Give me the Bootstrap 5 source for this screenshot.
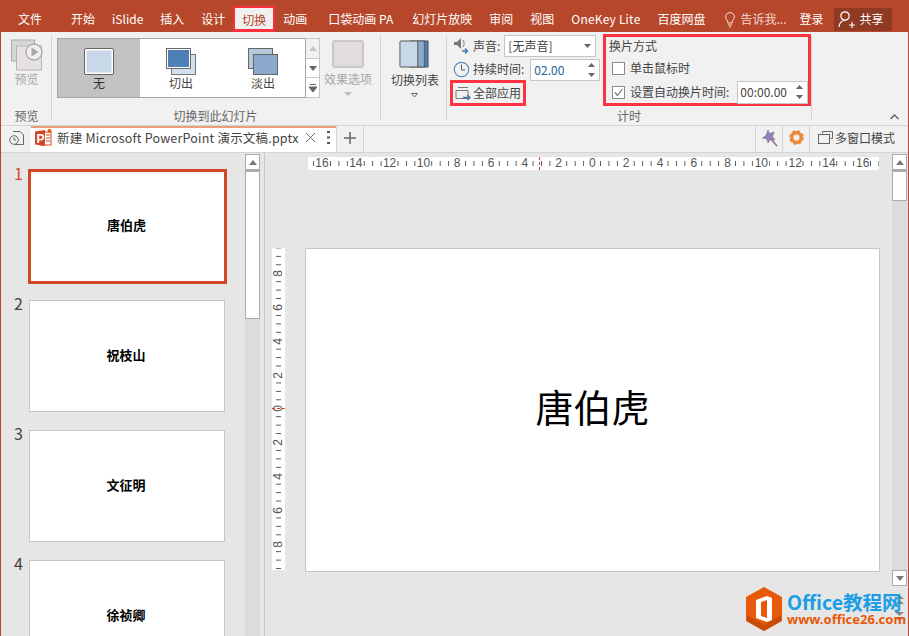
<!DOCTYPE html>
<html lang="zh-CN">
<head>
<meta charset="utf-8">
<title>PowerPoint 切换</title>
<link rel="stylesheet" href="https://cdn.jsdelivr.net/npm/bootstrap@5.3.0/dist/css/bootstrap.min.css">
<style>
html,body{margin:0;height:636px;overflow:hidden;}
body{font-family:"Noto Sans CJK SC","Noto Sans",sans-serif;font-size:12px;line-height:16px;color:#444;background:#e6e6e6;}
.pp-app{width:909px;height:636px;border-left:1px solid #b7472a;border-right:1px solid #b7472a;position:relative;overflow:hidden;}
.pp-menu{height:32px;background:#b7472a;color:#fff;padding-left:17px;column-gap:17px;white-space:nowrap;}
.pp-menu>span{line-height:38px;height:32px;flex:none;}
.pp-menu .pp-file{margin-right:12px;}
.pp-menu .pp-active{background:#f1f1f1;color:#b7472a;height:26px;line-height:24px;margin:6px -9px 0;padding:0 7px;border:2px solid #fb2f3d;border-bottom-width:3px;}
.pp-menu .pp-pa{margin-left:4px;padding-right:2px;}
.pp-menu .pp-onekey{letter-spacing:.2px;}
.pp-menu .pp-tell{margin-right:-4px;line-height:38px;color:#f0d8d0;}
.pp-menu .pp-share{background:#8f3a22;height:23px;line-height:22px;width:58px;margin:8px 0 0 -7px;padding-left:4px;}
.pp-ribbon{height:93px;background:#f1f1f1;color:#444;}
.pp-group{flex:none;padding:4px 0 1px;position:relative;}
.pp-group::after{content:"";position:absolute;right:0;top:4px;bottom:5px;width:1px;background:#d4d4d4;}
.pp-group-label{color:#666;text-align:center;height:16px;margin-top:auto;line-height:16px;}
.pp-dim{color:#a6a6a6;}
.pp-gallery{height:60px;width:263px;margin:2px 0 0 5px;}
.pp-gal-items{width:249px;border:1px solid #a6a6a6;background:#fff;}
.pp-gal-item{width:82px;text-align:center;padding-top:8px;line-height:15px;}
.pp-gal-item svg{display:block;margin:0 auto -2px;height:30px;}
.pp-gal-on{background:#c2c2c2;color:#333;}
.pp-gal-side{width:14px;border:1px solid #c6c6c6;border-left:0;}
.pp-gal-side>div{flex:1;background:#fff;border-bottom:1px solid #c6c6c6;}
.pp-gal-side>div:first-child{background:#f1f1f1;}
.pp-gal-side>div:last-child{border-bottom:0;}
.pp-field{background:#fff;border:1px solid #c6c6c6;height:22px;line-height:20px;padding-left:3px;color:#444;position:relative;}
.pp-field-num{color:#2b5f96;font-size:12px;}
.pp-redbox{border:3px solid #fb3440;}
.pp-check{width:13px;height:13px;border:1px solid #8a8a8a;background:#fff;flex:none;}
.pp-tabs{height:28px;background:#f1f1f1;border-top:1px solid #d4d4d4;border-bottom:1px solid #d4d4d4;}
.pp-doc{width:305px;height:26px;margin-left:6px;padding-bottom:4px;background:#fff;border-top:2px solid #ec9d7c;border-bottom:1px solid #fff;font-size:12.5px;letter-spacing:.2px;white-space:nowrap;}
.pp-tabcell{height:26px;border-left:1px solid #d4d4d4;padding-bottom:3px;}
.pp-main{height:483px;background:#e6e6e6;}
.pp-side{width:264px;flex:none;border-right:1px solid #c6c6c6;height:483px;}
.pp-thumbs{width:244px;padding-top:8px;overflow:hidden;}
.pp-row{height:130px;flex:none;align-items:center;}
.pp-num{width:28px;flex:none;padding-left:7px;text-align:center;font-size:16px;line-height:19px;align-self:flex-start;margin-top:3px;color:#444;}
.pp-num-on{color:#d24726;}
.pp-thumb{width:196px;height:112px;padding:0 2px 2px 0;background:#fff;border:1px solid #c6c6c6;font-weight:700;color:#000;font-size:13px;}
.pp-thumb-on{width:199px;height:115px;margin-left:-1px;border:3px solid #d24726;}
.pp-bar{width:15px;flex:none;margin-top:1px;background:#dcdcdc;}
.pp-bar-btn{height:16px;background:#fff;border:1px solid #ababab;flex:none;}
.pp-bar-thumb{background:#fff;border:1px solid #ababab;border-top-width:2px;flex:none;}
.pp-editor{flex:1;min-width:0;}
.pp-canvas{flex:1;min-width:0;}
.pp-hruler{width:571px;height:13px;margin:4px 0 0 43px;background:#fff linear-gradient(to right,#555 1px,transparent 1px) 5.15px center/8.45px 5px repeat-x;overflow:hidden;position:relative;color:#555;font-size:12px;line-height:13px;font-family:"Liberation Sans",sans-serif;}
.pp-hcell{width:33.8px;flex:none;text-align:center;}
.pp-hcell span{background:#fff;padding:0 .5px;display:inline-block;}
.pp-hcell:first-child{margin-left:-2.9px;}
.pp-vruler{width:13px;height:322px;margin:0 20px 0 7px;background:#fff linear-gradient(to bottom,#555 1px,transparent 1px) center 7.9px/5px 8.45px repeat-y;overflow:hidden;position:relative;color:#555;font-size:12px;line-height:13px;font-family:"Liberation Sans",sans-serif;padding-top:9.1px;}
.pp-vcell{height:33.8px;flex:none;}
.pp-vcell span{background:#fff;writing-mode:vertical-rl;transform:rotate(180deg);display:inline-block;padding:.5px 0;}
.pp-stage{margin-top:78px;}
.pp-slide{width:575px;height:324px;padding-bottom:8px;background:#fff;border:1px solid #c6c6c6;color:#000;font-size:38px;flex:none;letter-spacing:0;}
.pp-redh{position:absolute;left:231px;top:0;height:13px;width:0;border-left:1px dashed #d24726;}
.pp-redv{position:absolute;left:0;top:160px;width:13px;height:0;border-top:1px dashed #d24726;}
.pp-wm{position:absolute;left:745px;top:587px;width:163px;height:44px;gap:5px;}
.pp-wm-a{color:#1c9de4;font-size:19.5px;font-weight:700;line-height:20px;font-family:"Noto Sans CJK SC",sans-serif;white-space:nowrap;}
.pp-wm-b{color:#e8590c;font-size:13px;font-weight:700;line-height:14px;font-family:"Noto Sans",sans-serif;white-space:nowrap;}
.pp-rcol{width:15px;margin-right:1px;flex:none;}
.pp-rcol .pp-bar{height:432px;}
.pp-jump{height:18px;}
.pp-pglyph{font:700 12px "Liberation Sans",sans-serif;fill:#fff;}
</style>
</head>
<body>
<div class="pp-app d-flex flex-column">
  <div class="pp-menu d-flex">
    <span class="pp-file">文件</span><span>开始</span><span>iSlide</span><span>插入</span><span>设计</span>
    <span class="pp-active">切换</span><span>动画</span><span class="pp-pa">口袋动画 PA</span><span>幻灯片放映</span><span>审阅</span><span>视图</span><span class="pp-onekey">OneKey Lite</span><span>百度网盘</span>
    <span class="pp-tell d-flex align-items-start"><svg width="14" height="32" viewBox="0 0 14 32"><path d="M7 12.500a4.500 4.500 0 0 0-2.300 8.300V23h4.600v-2.200A4.500 4.500 0 0 0 7 12.500zM5 25h4M6 27h2" fill="none" stroke="#f5dfd8" stroke-width="1"/></svg><span class="ms-1">告诉我...</span></span>
    <span class="pp-plain">登录</span>
    <span class="pp-share d-flex"><svg width="18" height="22" viewBox="0 0 18 22" fill="none" stroke="#fff" stroke-width="1.200"><circle cx="7" cy="8" r="4.200"/><path d="M1 19c.5-4 2.500-6.500 6-6.500M11 17h6M14 14v6"/></svg><span class="ms-1">共享</span></span>
  </div>

  <div class="pp-ribbon d-flex">
    <div class="pp-group d-flex flex-column" style="width:51px;padding-top:7px">
      <div class="text-center pp-dim">
        <svg width="32" height="32" viewBox="0 0 32 32" class="d-block mx-auto"><rect x="0.500" y="1" width="23" height="21" fill="#d6d6d6" stroke="#a9a9a9"/><rect x="5.500" y="7" width="25" height="24" fill="#e6dfe3" stroke="#b5b5b5"/><circle cx="23" cy="13" r="8" fill="#efefef" stroke="#a9a9a9" stroke-width="1.300"/><path d="M20.500 8.500l7 4.500-7 4.500z" fill="#a6a6a6"/></svg>
        <div>预览</div>
      </div>
      <div class="pp-group-label">预览</div>
    </div>
    <div class="pp-group d-flex flex-column" style="width:329px">
      <div class="d-flex">
        <div class="pp-gallery d-flex">
          <div class="pp-gal-items d-flex">
            <div class="pp-gal-item pp-gal-on"><svg width="32" height="30" viewBox="0 0 32 30"><rect x="1.500" y="1.500" width="29" height="26" rx="1.500" fill="#fff" stroke="#666"/><rect x="3.500" y="3.500" width="25" height="22" fill="#c8d8e8"/></svg>无</div>
            <div class="pp-gal-item"><svg width="32" height="30" viewBox="0 0 32 30"><rect x="6.500" y="7.500" width="24" height="20" fill="#d4dfec" stroke="#777"/><rect x="1.500" y="1.500" width="24" height="20" fill="#fff" stroke="#666"/><rect x="3" y="3" width="21" height="17" fill="#4e7fb5"/></svg>切出</div>
            <div class="pp-gal-item"><svg width="32" height="30" viewBox="0 0 32 30"><rect x="1.500" y="1.500" width="24" height="20" fill="#b5c8dc" stroke="#666"/><rect x="6.500" y="7.500" width="24" height="20" fill="#8aa9cb" stroke="#666"/></svg>淡出</div>
          </div>
          <div class="pp-gal-side d-flex flex-column">
            <div class="d-flex align-items-center justify-content-center"><svg width="8" height="5"><path d="M0 5L4 0l4 5z" fill="#c6c6c6"/></svg></div>
            <div class="d-flex align-items-center justify-content-center"><svg width="8" height="5"><path d="M0 0l4 5 4-5z" fill="#666"/></svg></div>
            <div class="d-flex align-items-center justify-content-center"><svg width="8" height="8"><path d="M1 .5h6M0 3l4 5 4-5z" stroke="#666" fill="#666"/></svg></div>
          </div>
        </div>
        <div class="text-center pp-dim" style="width:54px;padding-left:2px;margin-top:4px">
          <svg width="32" height="28" viewBox="0 0 32 28" class="d-block mx-auto"><rect x="1" y="1" width="30" height="26" rx="1.500" fill="#e3dde1" stroke="#bdbdbd" stroke-width="1.500"/></svg>
          <div style="margin-top:3px;white-space:nowrap">效果选项</div>
          <svg width="8" height="5" class="d-block mx-auto" style="margin-top:5px"><path d="M0 0l4 4 4-4z" fill="#bdbdbd"/></svg>
        </div>
      </div>
      <div class="pp-group-label" style="padding-right:2px">切换到此幻灯片</div>
    </div>
    <div class="pp-group text-center" style="width:66px;padding-top:8px">
      <svg width="30" height="29" viewBox="0 0 32 29" class="d-block mx-auto" preserveAspectRatio="none"><rect x="19" y="1" width="12" height="26" fill="#4e7fb5" stroke="#555"/><rect x="12" y="1" width="15" height="26" fill="#8aa9cb" stroke="#555"/><rect x="1" y="1" width="19" height="26" rx="1" fill="#c8d8e8" stroke="#555"/></svg>
      <div style="margin-top:3px;white-space:nowrap;padding-left:2px">切换列表</div>
      <svg width="7" height="5" class="d-block mx-auto" style="margin-top:5px"><path d="M.5.500l3 3.500 3-3.500z" fill="none" stroke="#666"/></svg>
    </div>
    <div class="pp-group d-flex flex-column" style="width:365px;padding-top:2px">
      <div class="d-flex">
        <div style="width:156px;padding-left:3px">
          <div class="d-flex align-items-center" style="height:24px;padding-left:3px">
            <svg width="17" height="18" viewBox="0 0 17 18" fill="none"><path d="M1 5h3l4-4v11l-4-4H1z" fill="#777"/><path d="M10 3c1.500 2 1.500 5 0 7" stroke="#777"/><path d="M9 14h5M12 11.500l2.500 2.500-2.500 2.500" stroke="#3f76b0" stroke-width="1.300"/></svg>
            <span style="margin-left:3px">声音:</span>
            <div class="pp-field d-flex align-items-center justify-content-between" style="width:92px;margin-left:4px;padding-right:4px"><span>[无声音]</span><svg width="7" height="4"><path d="M0 0l3.500 4L7 0z" fill="#666"/></svg></div>
          </div>
          <div class="d-flex align-items-center" style="height:23px;padding-left:3px">
            <svg width="17" height="17" viewBox="0 0 17 17" fill="none"><circle cx="8.500" cy="8.500" r="7.200" stroke="#5a8dc0" stroke-width="1.200"/><path d="M8.500 3.500v5.500h3.500" stroke="#555"/></svg>
            <span style="margin-left:3px;padding-bottom:1px">持续时间:</span>
            <div class="pp-field pp-field-num d-flex align-items-center justify-content-between" style="width:70px;margin-left:6px;padding-right:4px"><span>02.00</span><svg width="7" height="16"><path d="M0 5l3.500-4L7 5zM0 11l3.500 4L7 11z" fill="#666"/></svg></div>
          </div>
          <div class="pp-redbox d-inline-flex align-items-center" style="width:76px;height:26px;margin-top:-1px;padding-left:2px">
            <svg width="16" height="16" viewBox="0 0 16 16" fill="none"><path d="M3 2.500h10M1 5.500h12v8H1z" stroke="#777"/><path d="M8 12.500h7M12.500 10l2.500 2.500-2.500 2.500" stroke="#3f76b0" stroke-width="1.300"/></svg>
            <span style="margin-left:2px;white-space:nowrap">全部应用</span>
          </div>
        </div>
        <div class="pp-redbox" style="width:208px;height:72px;padding:1px 0 0 3px">
          <div>换片方式</div>
          <div class="d-flex align-items-center" style="margin:6px 0 0 3px;height:16px"><span class="pp-check"></span><span style="margin-left:5px">单击鼠标时</span></div>
          <div class="d-flex align-items-center" style="margin:8px 0 0 3px;height:16px">
            <span class="pp-check d-flex"><svg width="11" height="11" viewBox="0 0 11 11"><path d="M2 5.500l2.500 3L9.500 2" fill="none" stroke="#777" stroke-width="1.200"/></svg></span>
            <span style="margin-left:5px;white-space:nowrap">设置自动换片时间:</span>
            <div class="pp-field pp-field-num d-flex align-items-center justify-content-between" style="width:71px;height:23px;margin-left:8px;padding-left:2px;padding-right:4px;color:#444"><span>00:00.00</span><svg width="7" height="16"><path d="M0 5l3.500-4L7 5zM0 11l3.500 4L7 11z" fill="#666"/></svg></div>
          </div>
        </div>
      </div>
      <div class="pp-group-label" style="margin-right:1px">计时</div>
    </div>
    <div class="flex-grow-1 d-flex align-items-end justify-content-end" style="padding:0 9px 5px 0">
      <svg width="9" height="6"><path d="M.5 5L4.500 1l4 4" fill="none" stroke="#666" stroke-width="1.500"/></svg>
    </div>
  </div>

  <div class="pp-tabs d-flex align-items-start">
    <div class="d-flex align-items-center" style="height:26px;padding:0 0 3px 8px">
      <svg width="16" height="16" viewBox="0 0 16 16" fill="none" stroke="#666"><path d="M4 1.500h7l3.500 3.500v9.500H6"/><circle cx="5" cy="10" r="4.300" fill="#f1f1f1"/><path d="M5 7.500V10h2"/></svg>
    </div>
    <div class="pp-doc d-flex align-items-center">
      <svg width="17" height="18" viewBox="0 0 17 18" style="margin:0 5px 0 4px"><rect x="6" y="3" width="10" height="13" fill="#fff" stroke="#d24726"/><path d="M0 2.500l10-1.500v16L0 15.500z" fill="#d24726"/><circle cx="14.500" cy="2" r="2" fill="#e8590c"/><path d="M11 6h4M11 9h4M11 12h4" stroke="#d24726"/><text x="1.500" y="13.500" class="pp-pglyph">P</text></svg>
      <span>新建 Microsoft PowerPoint 演示文稿.pptx</span>
      <svg width="11" height="11" style="margin-left:6px"><path d="M1 1l9 9M10 1l-9 9" stroke="#666"/></svg>
      <svg width="3" height="13" style="margin-left:11px"><path d="M0 1h3M0 6.500h3M0 12h3" stroke="#555" stroke-width="2"/></svg>
    </div>
    <div class="pp-tabcell d-flex align-items-center justify-content-center" style="width:27px"><svg width="12" height="12"><path d="M6 0v12M0 6h12" stroke="#666" stroke-width="1.500"/></svg></div>
    <div class="pp-tabcell" style="width:392px"></div>
    <div class="pp-tabcell d-flex align-items-center justify-content-center" style="width:27px"><svg width="17" height="18" viewBox="0 0 17 18"><path d="M7 1l1.500 3.500L13 3l-1.500 4.500L14 11l-4.500-.5L7 14l-1-4-4.500-1L5 6.500z" fill="#9a7cc4" stroke="#777" stroke-width=".6"/><path d="M10 10l6 7" stroke="#777" stroke-width="1.500"/></svg></div>
    <div class="pp-tabcell d-flex align-items-center justify-content-center" style="width:27px"><svg width="15" height="15" viewBox="0 0 15 15"><circle cx="7.500" cy="7.500" r="4.800" fill="none" stroke="#ed8b3a" stroke-width="3.400"/><circle cx="7.500" cy="7.500" r="6.400" fill="none" stroke="#ed8b3a" stroke-width="1.800" stroke-dasharray="3 2"/></svg></div>
    <div class="pp-tabcell d-flex align-items-center flex-grow-1" style="padding-left:8px;white-space:nowrap">
      <svg width="15" height="13" viewBox="0 0 15 13" fill="none" stroke="#666" style="margin-right:2px"><path d="M4.500 2.500v-2h10v7h-2"/><rect x=".5" y="3.500" width="11" height="9" fill="#f1f1f1"/></svg>多窗口模式
    </div>
  </div>

  <div class="pp-main d-flex">
    <div class="pp-side d-flex">
      <div class="pp-thumbs d-flex flex-column">
        <div class="pp-row d-flex"><div class="pp-num pp-num-on">1</div><div class="pp-thumb pp-thumb-on d-flex align-items-center justify-content-center">唐伯虎</div></div>
        <div class="pp-row d-flex"><div class="pp-num">2</div><div class="pp-thumb d-flex align-items-center justify-content-center">祝枝山</div></div>
        <div class="pp-row d-flex"><div class="pp-num">3</div><div class="pp-thumb d-flex align-items-center justify-content-center">文征明</div></div>
        <div class="pp-row d-flex"><div class="pp-num">4</div><div class="pp-thumb d-flex align-items-center justify-content-center">徐祯卿</div></div>
      </div>
      <div class="pp-bar d-flex flex-column">
        <div class="pp-bar-btn d-flex align-items-center justify-content-center"><svg width="8" height="5"><path d="M0 5L4 0l4 5z" fill="#777"/></svg></div>
        <div class="pp-bar-thumb" style="height:149px"></div>
      </div>
    </div>
    <div class="pp-editor d-flex">
      <div class="pp-canvas d-flex flex-column">
        <div class="pp-hruler d-flex">
          <div class="pp-hcell"><span>16</span></div><div class="pp-hcell"><span>14</span></div><div class="pp-hcell"><span>12</span></div><div class="pp-hcell"><span>10</span></div><div class="pp-hcell"><span>8</span></div><div class="pp-hcell"><span>6</span></div><div class="pp-hcell"><span>4</span></div><div class="pp-hcell"><span>2</span></div><div class="pp-hcell"><span>0</span></div><div class="pp-hcell"><span>2</span></div><div class="pp-hcell"><span>4</span></div><div class="pp-hcell"><span>6</span></div><div class="pp-hcell"><span>8</span></div><div class="pp-hcell"><span>10</span></div><div class="pp-hcell"><span>12</span></div><div class="pp-hcell"><span>14</span></div><div class="pp-hcell"><span>16</span></div>
          <div class="pp-redh"></div>
        </div>
        <div class="pp-stage d-flex align-items-start">
          <div class="pp-vruler d-flex flex-column">
            <div class="pp-vcell d-flex align-items-center justify-content-center"><span>8</span></div><div class="pp-vcell d-flex align-items-center justify-content-center"><span>6</span></div><div class="pp-vcell d-flex align-items-center justify-content-center"><span>4</span></div><div class="pp-vcell d-flex align-items-center justify-content-center"><span>2</span></div><div class="pp-vcell d-flex align-items-center justify-content-center"><span>0</span></div><div class="pp-vcell d-flex align-items-center justify-content-center"><span>2</span></div><div class="pp-vcell d-flex align-items-center justify-content-center"><span>4</span></div><div class="pp-vcell d-flex align-items-center justify-content-center"><span>6</span></div><div class="pp-vcell d-flex align-items-center justify-content-center"><span>8</span></div>
            <div class="pp-redv"></div>
          </div>
          <div class="pp-slide d-flex align-items-center justify-content-center">唐伯虎</div>
        </div>
      </div>
      <div class="pp-rcol d-flex flex-column">
        <div class="pp-bar d-flex flex-column">
          <div class="pp-bar-btn d-flex align-items-center justify-content-center"><svg width="8" height="5"><path d="M0 5L4 0l4 5z" fill="#777"/></svg></div>
          <div class="pp-bar-thumb" style="height:31px"></div>
          <div class="flex-grow-1"></div>
          <div class="pp-bar-btn d-flex align-items-center justify-content-center"><svg width="8" height="5"><path d="M0 0l4 5 4-5z" fill="#777"/></svg></div>
        </div>
        <div class="pp-jump d-flex align-items-center justify-content-center mt-1"><svg width="9" height="10"><path d="M0 5l4.500-4L9 5zM0 10l4.500-4L9 10z" fill="#888"/></svg></div>
        <div class="pp-jump d-flex align-items-center justify-content-center"><svg width="9" height="10"><path d="M0 0l4.500 4L9 0zM0 5l4.500 4L9 5z" fill="#888"/></svg></div>
      </div>
    </div>
  </div>

  <div class="pp-wm d-flex align-items-center">
    <svg width="36" height="44" viewBox="0 0 36 44" class="flex-shrink-0"><path d="M18 0l18 10v24L18 44 0 34V10z" fill="#e8590c"/><path d="M18 38L1 28v6l17 10 17-10v-6z" fill="#c84c09"/><path d="M21 9l-11 4v18l11 4 5-2V11z" fill="#fff"/><path d="M21 13l-6 2v14l6 2z" fill="#e8590c"/></svg>
    <div>
      <div class="pp-wm-a">Office教程网</div>
      <div class="pp-wm-b">www.office26.com</div>
    </div>
  </div>
</div>
<script src="https://cdn.jsdelivr.net/npm/bootstrap@5.3.0/dist/js/bootstrap.bundle.min.js"></script>
</body>
</html>
